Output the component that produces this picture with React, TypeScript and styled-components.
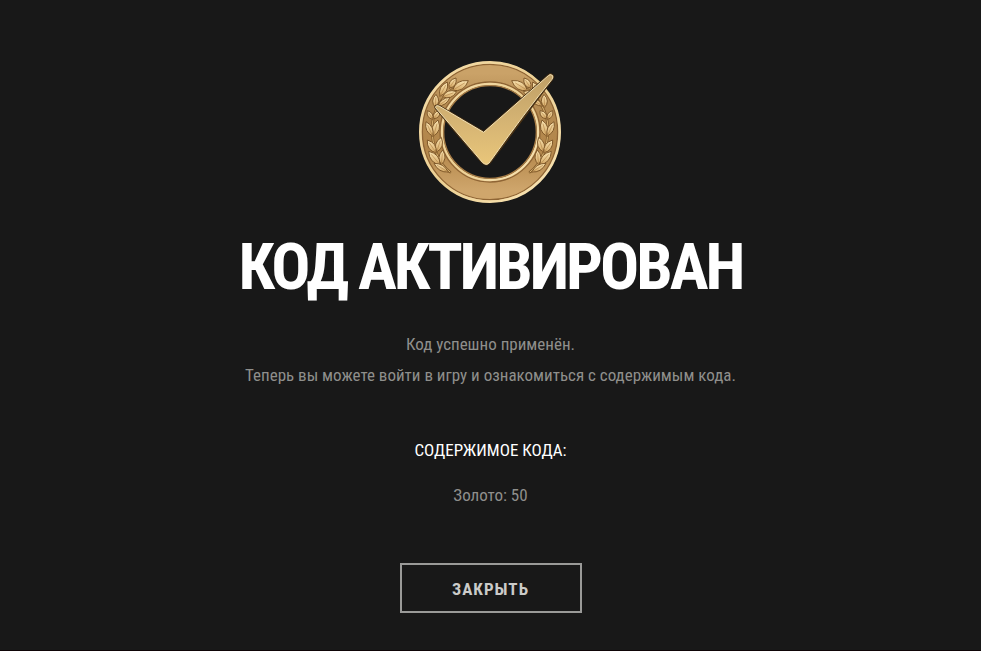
import React from "react";
import styled, { createGlobalStyle } from "styled-components";

const GlobalStyle = createGlobalStyle`
  * {
    box-sizing: border-box;
  }

  body {
    margin: 0;
    background: #181818;
    font-family: "Roboto Condensed", "Liberation Sans Narrow", Roboto, sans-serif;
  }
`;

const Page = styled.main`
  display: flex;
  flex-direction: column;
  align-items: center;
  min-height: 100vh;
  padding: 60px 24px 37px;
  border-bottom: 1px solid #0e0507;
  text-align: center;
`;

const Medal = styled.svg`
  display: block;
  width: 145px;
  height: 145px;
`;

const Title = styled.h1`
  margin: 22px 0 0;
  color: #ffffff;
  font-size: 65px;
  font-weight: 700;
  line-height: 80px;
  letter-spacing: -3px;
  text-transform: uppercase;
`;

const Message = styled.p`
  margin: 22px 0 0;
  color: #8f8f8c;
  font-size: 17px;
  line-height: 31px;
`;

const Line = styled.span`
  display: block;
`;

const Contents = styled.section`
  margin-top: 44px;
  font-size: 17px;
`;

const ContentsTitle = styled.h2`
  margin: 0;
  color: #ffffff;
  font-size: 17px;
  font-weight: 400;
  line-height: 31px;
  text-transform: uppercase;
`;

const ContentsList = styled.ul`
  margin: 14px 0 0;
  padding: 0;
  color: #8f8f8c;
  line-height: 31px;
  list-style: none;
`;

const CloseButton = styled.button`
  min-width: 182px;
  height: 50px;
  margin-top: 52px;
  padding: 2px 24px 0;
  border: 2px solid #9a9a98;
  background: transparent;
  color: #cbcbc9;
  font-family: inherit;
  font-size: 17px;
  font-weight: 700;
  letter-spacing: 1px;
  text-transform: uppercase;
  cursor: pointer;

  &:hover {
    border-color: #ffffff;
    color: #ffffff;
  }
`;

type LeafShape = [number, number, number, number, number];

/* base x, base y, tip x, tip y, half width */
const leaves: LeafShape[] = [
  [128, 121, 175, 92, 14],
  [118, 114, 138, 84, 11],
  [98, 140, 140, 125, 12],
  [90, 138, 112, 96, 12],
  [84, 168, 120, 142, 9],
  [76, 172, 78, 133, 11],
  [70, 206, 90, 182, 10],
  [68, 208, 52, 182, 9],
  [71, 258, 84, 210, 13],
  [68, 258, 48, 215, 11],
  [80, 306, 94, 262, 12],
  [78, 308, 52, 270, 12],
  [94, 344, 98, 300, 11],
  [90, 344, 56, 304, 13],
  [114, 366, 72, 340, 10],
];

function leafPath([x1, y1, x2, y2, w]: LeafShape) {
  const dx = x2 - x1;
  const dy = y2 - y1;
  const len = Math.hypot(dx, dy);
  const nx = (-dy / len) * w;
  const ny = (dx / len) * w;
  const mx = x1 + dx * 0.45;
  const my = y1 + dy * 0.45;
  return `M${x1} ${y1}Q${mx + nx * 1.7} ${my + ny * 1.7} ${x2} ${y2}Q${mx - nx * 1.7} ${my - ny * 1.7} ${x1} ${y1}Z`;
}

function Branch() {
  return (
    <g strokeLinecap="round" strokeLinejoin="round">
      <path
        d="M120 366C84 340 66 285 66 236C67 190 88 146 138 110"
        fill="none"
        stroke="#86602f"
        strokeWidth="8"
      />
      <path
        d="M120 366C84 340 66 285 66 236C67 190 88 146 138 110"
        fill="none"
        stroke="#ddb572"
        strokeWidth="3"
      />
      {leaves.map((leaf, i) => (
        <g key={i}>
          <path d={leafPath(leaf)} fill="url(#leaf)" stroke="#80592a" strokeWidth="3" />
          <path
            d={`M${leaf[0]} ${leaf[1]}L${leaf[0] + (leaf[2] - leaf[0]) * 0.75} ${leaf[1] + (leaf[3] - leaf[1]) * 0.75}`}
            stroke="#b3874a"
            strokeWidth="2"
          />
        </g>
      ))}
    </g>
  );
}

function SuccessMedal() {
  return (
    <Medal viewBox="24 30 435 435" aria-hidden="true">
      <defs>
        <linearGradient id="ring" x1="0" y1="0" x2="0" y2="1">
          <stop offset="0" stopColor="#caa268" />
          <stop offset="0.25" stopColor="#b58c53" />
          <stop offset="0.65" stopColor="#b3864a" />
          <stop offset="1" stopColor="#cfa66c" />
        </linearGradient>
        <linearGradient id="rim" x1="0" y1="0" x2="1" y2="1">
          <stop offset="0" stopColor="#f4dca9" />
          <stop offset="0.5" stopColor="#ecd093" />
          <stop offset="1" stopColor="#fae6b8" />
        </linearGradient>
        <linearGradient id="leaf" x1="0" y1="0" x2="0" y2="1">
          <stop offset="0" stopColor="#fbe6b4" />
          <stop offset="1" stopColor="#d3a662" />
        </linearGradient>
        <linearGradient id="check" x1="0" y1="0" x2="0" y2="1">
          <stop offset="0" stopColor="#bf9f66" />
          <stop offset="0.5" stopColor="#d4b373" />
          <stop offset="1" stopColor="#e9c67a" />
        </linearGradient>
      </defs>
      <circle cx="240" cy="246" r="176" fill="none" stroke="url(#ring)" strokeWidth="70" />
      <circle cx="240" cy="246" r="203" fill="none" stroke="#8f6535" strokeWidth="4" />
      <circle cx="240" cy="246" r="209" fill="none" stroke="url(#rim)" strokeWidth="8" />
      <circle cx="240" cy="246" r="150" fill="none" stroke="#8f6535" strokeWidth="4" />
      <circle cx="240" cy="246" r="144" fill="none" stroke="url(#rim)" strokeWidth="7" />
      <circle cx="240" cy="246" r="139" fill="none" stroke="#a67b45" strokeWidth="4" />
      <Branch />
      <g transform="translate(480 0) scale(-1 1)">
        <Branch />
      </g>
      <path
        d="M76 172Q78 164 87 168L221 247L415 77Q420 71 427 76Q431 80 426 88Q350 190 242 334Q232 350 218 338Q165 280 76 172Z"
        fill="none"
        stroke="#4a3214"
        strokeWidth="7"
        strokeLinejoin="round"
      />
      <path
        d="M76 172Q78 164 87 168L221 247L415 77Q420 71 427 76Q431 80 426 88Q350 180 241 334Q232 350 218 338Q165 276 76 172Z"
        fill="url(#check)"
        stroke="#f3e2b6"
        strokeWidth="3"
        strokeLinejoin="round"
      />
    </Medal>
  );
}

export default function App() {
  return (
    <>
      <GlobalStyle />
      <Page>
        <SuccessMedal />
        <Title>Код активирован</Title>
        <Message>
          <Line>Код успешно применён.</Line>
          <Line>Теперь вы можете войти в игру и ознакомиться с содержимым кода.</Line>
        </Message>
        <Contents>
          <ContentsTitle>Содержимое кода:</ContentsTitle>
          <ContentsList>
            <li>Золото: 50</li>
          </ContentsList>
        </Contents>
        <CloseButton type="button">Закрыть</CloseButton>
      </Page>
    </>
  );
}
